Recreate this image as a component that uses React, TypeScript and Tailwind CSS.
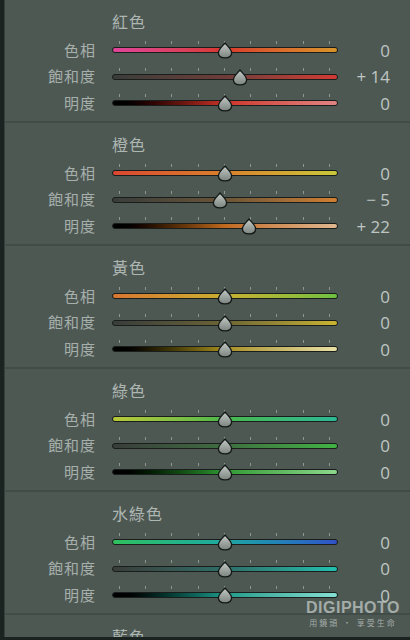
import React from 'react';

interface Row {
  label: string;
  value: number;
  track: string;
}

interface Section {
  name: string;
  rows: Row[];
}

const sections: Section[] = [
  {
    name: '紅色',
    rows: [
      { label: '色相', value: 0, track: 'bg-linear-to-r from-[#e0449a] via-[#d8382c] to-[#d8942a]' },
      { label: '飽和度', value: 14, track: 'bg-linear-to-r from-[#383d3a] via-[#6e3c38] to-[#d23a34]' },
      { label: '明度', value: 0, track: 'bg-linear-to-r from-[#000000] via-[#cc3328] to-[#e08484]' },
    ],
  },
  {
    name: '橙色',
    rows: [
      { label: '色相', value: 0, track: 'bg-linear-to-r from-[#da4630] via-[#d8802c] to-[#c8c83a]' },
      { label: '飽和度', value: -5, track: 'bg-linear-to-r from-[#383d3a] via-[#6a5436] to-[#d28030]' },
      { label: '明度', value: 22, track: 'bg-linear-to-r from-[#000000] via-[#c06a1e] to-[#e0b890]' },
    ],
  },
  {
    name: '黃色',
    rows: [
      { label: '色相', value: 0, track: 'bg-linear-to-r from-[#d87630] via-[#c8b030] to-[#6cc040]' },
      { label: '飽和度', value: 0, track: 'bg-linear-to-r from-[#383d3a] via-[#6c6434] to-[#cab430]' },
      { label: '明度', value: 0, track: 'bg-linear-to-r from-[#000000] via-[#a89020] to-[#e8e0a4]' },
    ],
  },
  {
    name: '綠色',
    rows: [
      { label: '色相', value: 0, track: 'bg-linear-to-r from-[#b8c838] via-[#48b84a] to-[#2cb894]' },
      { label: '飽和度', value: 0, track: 'bg-linear-to-r from-[#383d3a] via-[#3e6e40] to-[#40b444]' },
      { label: '明度', value: 0, track: 'bg-linear-to-r from-[#000000] via-[#2e9a32] to-[#8cd88c]' },
    ],
  },
  {
    name: '水綠色',
    rows: [
      { label: '色相', value: 0, track: 'bg-linear-to-r from-[#30c05c] via-[#20a8a0] to-[#3050c8]' },
      { label: '飽和度', value: 0, track: 'bg-linear-to-r from-[#383d3a] via-[#2c6e68] to-[#20c0b0]' },
      { label: '明度', value: 0, track: 'bg-linear-to-r from-[#000000] via-[#1c9a8a] to-[#84e0d2]' },
    ],
  },
  {
    name: '藍色',
    rows: [],
  },
];

const ticks = [7, 33, 59, 86, 112, 138, 164, 191, 217];

function formatValue(v: number) {
  if (v > 0) return `+ ${v}`;
  if (v < 0) return `− ${Math.abs(v)}`;
  return '0';
}

function Thumb() {
  return (
    <svg width="16" height="17" viewBox="0 0 16 17">
      <defs>
        <linearGradient id="thumbFill" x1="0" y1="0" x2="0" y2="1">
          <stop offset="0" stopColor="#c4cbc7" />
          <stop offset="1" stopColor="#7c8480" />
        </linearGradient>
      </defs>
      <path
        d="M8 1 C9.5 3 14.6 7.2 14.6 10.8 C14.6 14.2 11.6 15.9 8 15.9 C4.4 15.9 1.4 14.2 1.4 10.8 C1.4 7.2 6.5 3 8 1 Z"
        fill="url(#thumbFill)"
        stroke="#141917"
        strokeWidth="1.4"
        strokeLinejoin="round"
      />
    </svg>
  );
}

function SliderRow({ row }: { row: Row }) {
  // 0 sits at the middle of the track, 1.1px per step
  const center = 113 + row.value * 1.1;
  return (
    <div className="flex h-[26.5px] items-center">
      <div className="w-[92px] pr-px text-right text-[15px] leading-none tracking-[1px] text-[#a7afab]">
        {row.label}
      </div>
      <div className="relative ml-[15px] h-full w-[226px]">
        {ticks.map((t) => (
          <div key={t} className="absolute top-[5px] h-[3px] w-px bg-[#8e9692]" style={{ left: t }} />
        ))}
        <div className="absolute top-[11px] left-0 h-[6px] w-full rounded-full border border-[#191e1c] bg-[#191e1c]">
          <div className={`h-full w-full rounded-full ${row.track}`} />
        </div>
        <div className="absolute top-[6px]" style={{ left: center - 8 }}>
          <Thumb />
        </div>
      </div>
      <div className="w-[52px] pt-[2px] text-right font-['Open_Sans',sans-serif] text-[17px] leading-none text-[#bfc6c2]">
        {formatValue(row.value)}
      </div>
    </div>
  );
}

export default function App() {
  return (
    <div className="relative h-[640px] w-[410px] overflow-hidden border-b-[3px] border-l-4 border-[#1b2320] bg-[#4d5853] font-['Noto_Sans_CJK_TC','Noto_Sans',sans-serif]">
      <div className="flex flex-col border-l border-[#36403c]">
        {sections.map((s) => (
          <div key={s.name} className="h-[123px] shrink-0 border-b-2 border-[#414b47] pt-[11px]">
            <div className="pl-[107px] text-[16px] leading-[20px] tracking-[1px] text-[#aeb6b2]">{s.name}</div>
            <div className="mt-[5px] flex flex-col">
              {s.rows.map((r) => (
                <SliderRow key={r.label} row={r} />
              ))}
            </div>
          </div>
        ))}
      </div>

      {/* 浮水印 */}
      <div className="absolute top-[600px] left-[297px] flex w-[104px] flex-col items-center text-[#c2c8c5]/75">
        <div className="font-['Liberation_Sans',sans-serif] text-[16px] leading-[15px] font-bold tracking-[0.5px]">
          DIGIPHOTO
        </div>
        <div className="mt-[3px] whitespace-nowrap text-[8px] leading-[9px] tracking-[2px]">用鏡頭 · 享受生命</div>
      </div>
    </div>
  );
}
